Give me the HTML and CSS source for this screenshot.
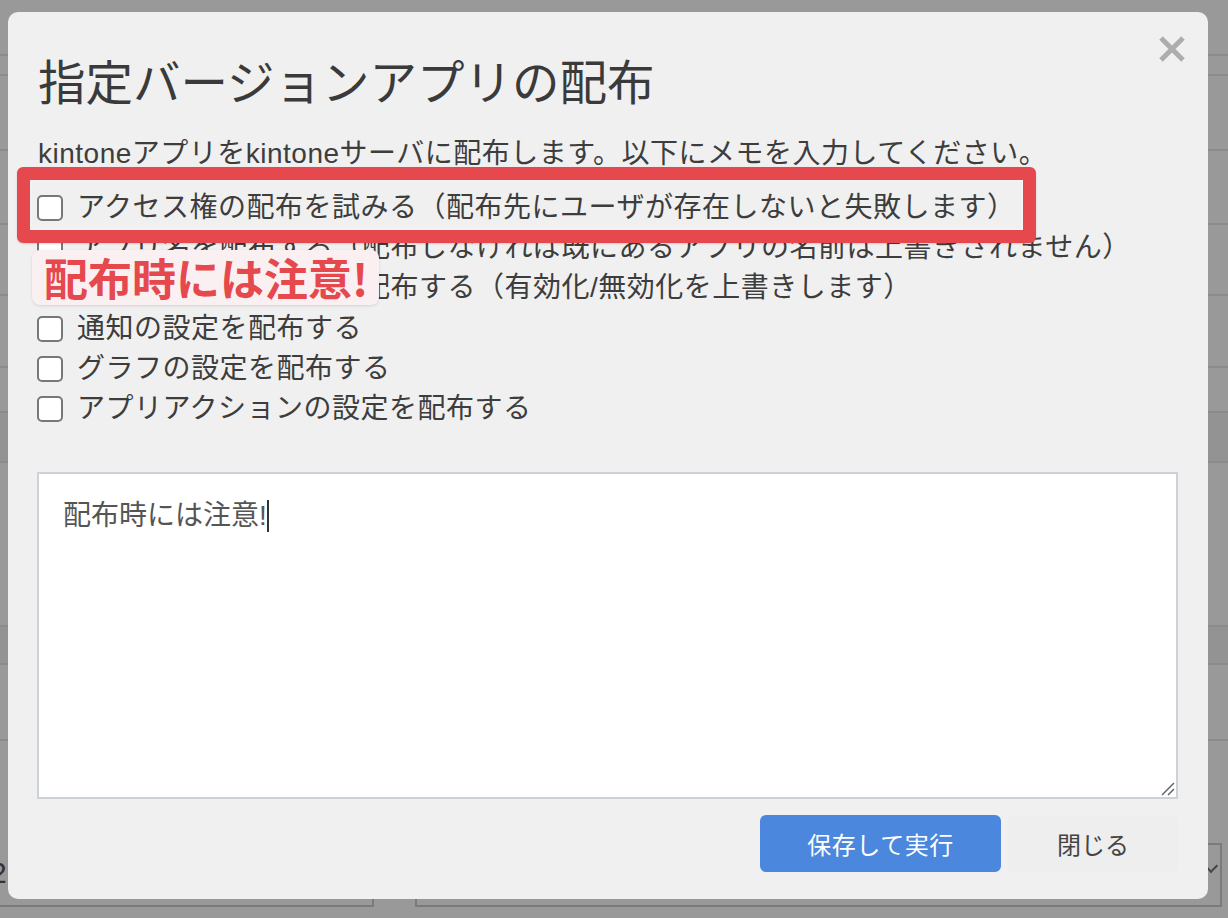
FILE: index.html
```html
<!DOCTYPE html>
<html lang="ja">
<head>
    <meta charset="UTF-8">
    <meta name="viewport" content="width=device-width, initial-scale=1.0">
    <title>指定バージョンアプリの配布</title>
    <link rel="stylesheet" href="styles.css">
</head>
<body>
    <div class="screen">
        <!-- ページ本体（オーバーレイの下） -->
        <div class="bg-rows">
            <div class="bg-row h56"></div>
            <div class="bg-row h20"></div>
            <div class="bg-row h75"></div>
            <div class="bg-row h74"></div>
            <div class="bg-row h71"></div>
            <div class="bg-row h72"></div>
            <div class="bg-row h45"></div>
            <div class="bg-row h50 dark"></div>
            <div class="bg-row h164"></div>
            <div class="bg-row h38 dark"></div>
            <div class="bg-row h76"></div>
            <div class="bg-row h102 last"></div>
        </div>
        <div class="bg-fields">
            <div class="bg-field left"><span class="bg-num">2</span></div>
            <div class="bg-field right"><span class="bg-chev"></span></div>
        </div>

        <!-- ダイアログ -->
        <div class="modal">
            <button class="close-x" aria-label="閉じる">
                <svg width="28" height="28" viewBox="0 0 28 28">
                    <path d="M3 3 L25 25 M25 3 L3 25" stroke="#adadad" stroke-width="5" fill="none"/>
                </svg>
            </button>

            <h1>指定バージョンアプリの配布</h1>
            <p class="desc">kintoneアプリをkintoneサーバに配布します。以下にメモを入力してください。</p>

            <div class="options">
                <label class="option"><input type="checkbox"> アクセス権の配布を試みる（配布先にユーザが存在しないと失敗します）</label>
                <label class="option"><input type="checkbox"> アプリ名を配布する（配布しなければ既にあるアプリの名前は上書きされません）</label>
                <label class="option"><input type="checkbox"> プロセス管理の設定を配布する（有効化/無効化を上書きします）</label>
                <label class="option"><input type="checkbox"> 通知の設定を配布する</label>
                <label class="option"><input type="checkbox"> グラフの設定を配布する</label>
                <label class="option"><input type="checkbox"> アプリアクションの設定を配布する</label>
            </div>

            <div class="memo">
                <span>配布時には注意!</span><span class="caret"></span>
                <svg class="grip" width="16" height="16" viewBox="0 0 16 16">
                    <path d="M15 3 L3 15 M15 9 L9 15" stroke="#666" stroke-width="1.5" fill="none"/>
                </svg>
            </div>

            <div class="actions">
                <button class="btn primary">保存して実行</button>
                <button class="btn plain">閉じる</button>
            </div>

            <!-- 注釈 -->
            <div class="highlight"></div>
            <div class="callout">配布時には注意!</div>
        </div>
    </div>
</body>
</html>
```

FILE: styles.css
```css
/* Reset */
* {
    margin: 0;
    padding: 0;
    box-sizing: border-box;
}

:root {
    --overlay: #999999;
    --line: #8b8b8b;
    --modal: #f0f0f0;
    --text: #3d3d3d;
    --accent: #e5484d;
    --blue: #4a87dd;
}

body {
    font-family: "Liberation Sans", "Noto Sans CJK JP", sans-serif;
    background: var(--overlay);
    color: var(--text);
}

.screen {
    position: relative;
    width: 1228px;
    height: 918px;
    overflow: hidden;
}

/* 背景のページ */
.bg-row {
    border-bottom: 2px solid var(--line);
}

.bg-row.dark { background: #939393; }
.bg-row.last { border-bottom: none; }

.h20 { height: 20px; }
.h38 { height: 38px; }
.h45 { height: 45px; }
.h50 { height: 50px; }
.h56 { height: 56px; }
.h71 { height: 71px; }
.h72 { height: 72px; }
.h74 { height: 74px; }
.h75 { height: 75px; }
.h76 { height: 76px; }
.h102 { height: 102px; }
.h164 { height: 164px; }

.bg-fields {
    display: flex;
    gap: 41px;
    padding-right: 6px;
}

.bg-field {
    height: 64px;
    border: 2px solid #7b7b7b;
    border-top: none;
    position: relative;
}

.bg-field.left {
    width: 374px;
    border-left: none;
}

.bg-field.right {
    flex: 1;
    border-top: 2px solid #7b7b7b;
}

.bg-num {
    font-size: 30px;
    color: #333;
    line-height: 60px;
    margin-left: -10px;
}

.bg-chev {
    position: absolute;
    right: 4px;
    top: 16px;
    width: 10px;
    height: 10px;
    border-right: 2px solid #444;
    border-bottom: 2px solid #444;
    transform: rotate(45deg);
}

/* ダイアログ */
.modal {
    position: absolute;
    left: 8px;
    top: 12px;
    width: 1200px;
    background: var(--modal);
    border-radius: 10px;
    padding: 43px 30px 27px 29px;
    display: flex;
    flex-direction: column;
}

.close-x {
    position: absolute;
    left: 1150px;
    top: 23px;
    width: 28px;
    height: 28px;
    border: none;
    background: none;
    display: flex;
}

h1 {
    font-size: 47.5px;
    line-height: 58px;
    font-weight: normal;
    color: #3a3a3a;
    padding-left: 1px;
}

.desc {
    margin-top: 21px;
    font-size: 28px;
    line-height: 40px;
    letter-spacing: 0.5px;
    padding-left: 1px;
}

.options {
    margin-top: 14px;
    display: flex;
    flex-direction: column;
}

.option {
    display: flex;
    align-items: center;
    font-size: 28px;
    line-height: 40px;
    height: 40.2px;
    letter-spacing: 0.5px;
    white-space: nowrap;
}

.option input {
    appearance: none;
    width: 26px;
    height: 26px;
    border: 2px solid #777;
    border-radius: 5px;
    background: #fff;
    margin-right: 14px;
    flex-shrink: 0;
}

.memo {
    position: relative;
    margin-top: 43px;
    height: 327px;
    background: #fff;
    border: 2px solid #cdd1d8;
    padding: 22px 24px;
    font-size: 28px;
    line-height: 40px;
    color: #555;
}

.caret {
    display: inline-block;
    width: 2px;
    height: 32px;
    background: #333;
    vertical-align: -7px;
}

.grip {
    position: absolute;
    right: 1px;
    bottom: 1px;
}

.actions {
    margin-top: 16px;
    display: flex;
    justify-content: flex-end;
    gap: 7px;
}

.btn {
    font-family: "Liberation Sans", "Noto Sans CJK JP", sans-serif;
    font-size: 24px;
    height: 57px;
    border: none;
    border-radius: 6px;
    cursor: pointer;
}

.btn.primary {
    width: 241px;
    background: var(--blue);
    color: #fff;
    letter-spacing: 0.5px;
}

.btn.plain {
    width: 170px;
    background: #eeeeee;
    color: #444;
}

/* 注釈 */
.highlight {
    position: absolute;
    left: 9px;
    top: 155px;
    width: 1019px;
    height: 76px;
    border: 13px solid var(--accent);
    border-radius: 6px;
    box-shadow: inset 0 0 3px rgba(255, 255, 255, 0.9), 0 1px 2px rgba(0, 0, 0, 0.15);
}

.callout {
    position: absolute;
    left: 24px;
    top: 238px;
    width: 347px;
    height: 55px;
    background: #faf0f1;
    border-radius: 8px;
    box-shadow: 0 1px 3px rgba(0, 0, 0, 0.12);
    color: var(--accent);
    font-family: "Noto Sans CJK JP", sans-serif;
    font-weight: bold;
    font-size: 44px;
    line-height: 55px;
    padding-left: 12px;
    white-space: nowrap;
}
```
